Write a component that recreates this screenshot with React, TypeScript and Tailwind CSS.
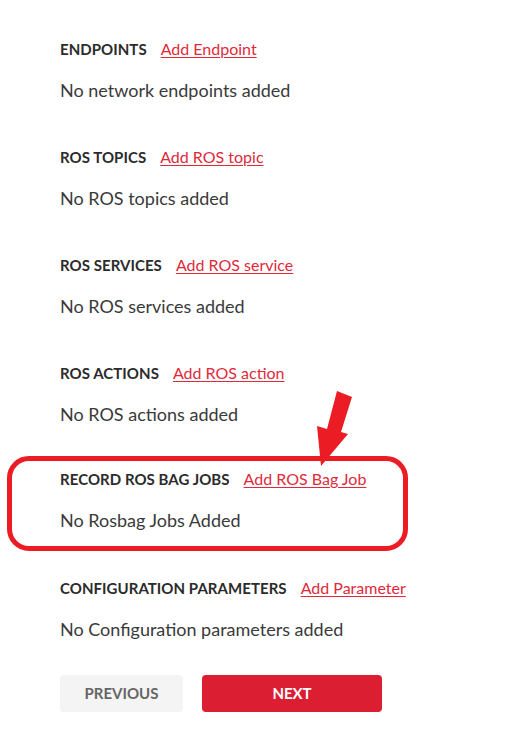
import React from "react";

function Section({ title, link, empty }: { title: string; link: string; empty: string }) {
  return (
    <div className="flex flex-col">
      <div className="flex items-center h-[20px]">
        <span className="text-[15px] font-bold text-[#2b2b2b] tracking-[0.05px]">{title}</span>
        <a className="ml-[14px] text-[16px] text-[#e02a3c] underline underline-offset-[2px]">{link}</a>
      </div>
      <div className="mt-[19px] h-[24px] flex items-center text-[18px] text-[#3a3a3a]">{empty}</div>
    </div>
  );
}

export default function App() {
  return (
    <div className="relative w-[507px] h-[738px] bg-white overflow-hidden" style={{ fontFamily: "Lato, 'Liberation Sans', sans-serif" }}>
      <div className="flex flex-col pt-[39px]">
        <div className="pl-[60px] flex flex-col gap-[45px]">
          <Section title="ENDPOINTS" link="Add Endpoint" empty="No network endpoints added" />
          <Section title="ROS TOPICS" link="Add ROS topic" empty="No ROS topics added" />
          <Section title="ROS SERVICES" link="Add ROS service" empty="No ROS services added" />
          <Section title="ROS ACTIONS" link="Add ROS action" empty="No ROS actions added" />
        </div>
        <div className="mt-[30px] ml-[7px] w-[401px] h-[95px] border-[5px] border-[#ec1c24] rounded-[22px] pl-[48px] pt-[8px]">
          <Section title="RECORD ROS BAG JOBS" link="Add ROS Bag Job" empty="No Rosbag Jobs Added" />
        </div>
        <div className="mt-[27px] pl-[60px]">
          <Section title="CONFIGURATION PARAMETERS" link="Add Parameter" empty="No Configuration parameters added" />
        </div>
        <div className="mt-[34px] pl-[60px] flex gap-[19px]">
          <button className="w-[123px] h-[37px] rounded-[4px] bg-[#f4f4f4] text-[#666666] text-[15px] font-bold">PREVIOUS</button>
          <button className="w-[180px] h-[37px] rounded-[4px] bg-[#dc1e32] text-white text-[15px] font-bold">NEXT</button>
        </div>
      </div>
      <svg className="absolute left-0 top-0 pointer-events-none" width="507" height="738" viewBox="0 0 507 738">
        <polygon points="337,391 352,397 341,432 348,434 321,466 317,426 327,429" fill="#ec1c24" />
      </svg>
    </div>
  );
}
